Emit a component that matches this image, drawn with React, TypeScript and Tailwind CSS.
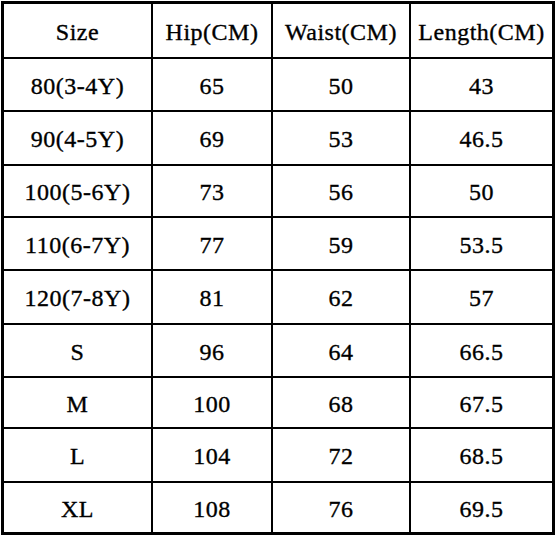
import React from "react";

const header = ["Size", "Hip(CM)", "Waist(CM)", "Length(CM)"];
const rows = [
  ["80(3-4Y)", "65", "50", "43"],
  ["90(4-5Y)", "69", "53", "46.5"],
  ["100(5-6Y)", "73", "56", "50"],
  ["110(6-7Y)", "77", "59", "53.5"],
  ["120(7-8Y)", "81", "62", "57"],
  ["S", "96", "64", "66.5"],
  ["M", "100", "68", "67.5"],
  ["L", "104", "72", "68.5"],
  ["XL", "108", "76", "69.5"],
];

export default function App() {
  const all = [header, ...rows];
  return (
    <div className="w-[556px] h-[537px] bg-white pt-[1px] pl-[1px]">
      <div className="w-[554px] h-[534px] border-[3px] border-black bg-black">
        <div
          className="grid grid-cols-[147px_118px_136px_141px] grid-rows-[53px_51px_52px_50px_51px_52px_51px_49px_52px_49px] gap-[2px] w-full h-full"
          style={{ fontFamily: '"Liberation Serif", "Noto Sans CJK SC", serif' }}
        >
          {all.map((r, i) =>
            r.map((c, j) => (
              <div
                key={`${i}-${j}`}
                className="bg-white flex items-center justify-center text-[24px] tracking-[0.5px] text-black leading-none pt-[2px] [-webkit-text-stroke:0.35px_black]"
              >
                {c}
              </div>
            ))
          )}
        </div>
      </div>
    </div>
  );
}
